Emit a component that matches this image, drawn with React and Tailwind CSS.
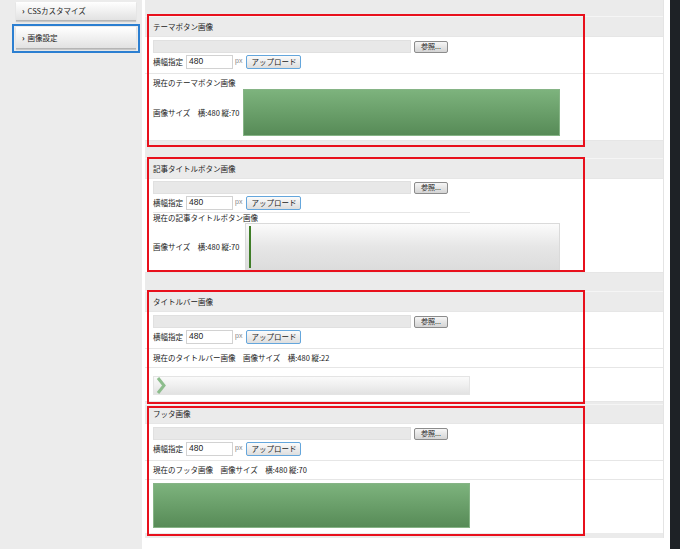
import React from 'react';

// 画像設定ページ（管理画面のスクリーンショット再現）

function FileRow({ tight = false }) {
  return (
    <div className={`px-[8px] ${tight ? 'pt-[2px] pb-[2px]' : 'pt-[3px] pb-[4px]'}`}>
      <div className="flex h-[13px] items-center">
        <div className="h-[13px] w-[258px] border border-[#e0e0e0] bg-[#e8e8e8]" />
        <button className="ml-[3px] flex h-[12px] w-[34px] items-center justify-center rounded-[2px] border border-[#8c8c8c] bg-gradient-to-b from-[#f6f6f6] to-[#d4d4d4] text-[7px] leading-none text-[#222]">
          参照...
        </button>
      </div>
      <div className="mt-[1px] flex h-[15px] items-center">
        <span className="text-[7.5px] leading-none">横幅指定</span>
        <div className="ml-[3px] flex h-[14px] w-[47px] items-center border border-[#d2d2d2] bg-white pl-[2px] font-[family-name:'Liberation_Sans',sans-serif] text-[8.5px] text-[#222]">
          480
        </div>
        <span className="ml-[2px] font-[family-name:'Liberation_Sans',sans-serif] text-[7px] text-[#888]">px</span>
        <button className="ml-[4px] flex h-[14px] w-[55px] items-center justify-center rounded-[2px] border border-[#64a6dc] bg-gradient-to-b from-[#fbfbfb] to-[#dedede] text-[7.5px] leading-none text-[#222]">
          アップロード
        </button>
      </div>
    </div>
  );
}

function GreenImage({ h = 'h-[47px]' }) {
  return <div className={`w-[317px] ${h} border border-[#86b486] bg-gradient-to-b from-[#7db37d] to-[#578b57]`} />;
}

function Header({ children, h = 'h-[20px]' }) {
  return (
    <div className={`flex ${h} items-center border-t border-[#f5f5f5] bg-[#ebebeb] px-[8px] text-[7.5px] text-[#222]`}>
      {children}
    </div>
  );
}

function SideButton({ children, h = 'h-[19px]' }) {
  return (
    <div className={`flex ${h} w-[120px] items-center border-b border-[#b5b5b5] bg-gradient-to-b from-white to-[#e2e2e2] pl-[6px] text-[7.5px] text-[#222] shadow-[0_1px_1px_rgba(0,0,0,0.15)]`}>
      <span className="mr-[3px] text-[8px] font-bold leading-none">›</span>
      {children}
    </div>
  );
}

export default function App() {
  return (
    <div className="flex h-[549px] w-[680px] overflow-hidden bg-[#1e2226] font-[family-name:'Noto_Sans_CJK_JP',sans-serif] text-[#222]">
      {/* サイドメニュー */}
      <aside className="w-[142px] shrink-0 bg-[#ececec] pt-[2px]">
        <div className="ml-[16px]">
          <SideButton>CSSカスタマイズ</SideButton>
        </div>
        <div className="ml-[12px] mt-[3px] h-[29px] w-[128px] border-2 border-[#2c7fd1] px-[2px] pt-[1px]">
          <SideButton h="h-[22px]">画像設定</SideButton>
        </div>
      </aside>

      {/* メイン */}
      <main className="w-[528px] shrink-0 bg-white pl-[3px] pr-[6px]">
        <div className="relative w-[519px] border-r border-[#e4e4e4] text-[7.5px]">
          {/* テーマボタン画像 */}
          <div className="h-[16px] bg-[#ebebeb]" />
          <Header>テーマボタン画像</Header>
          <div className="border-t border-[#e6e6e6]">
            <FileRow />
          </div>
          <div className="border-t border-[#e6e6e6] px-[8px] pt-[3px] pb-[4px]">
            <div className="h-[12px] leading-[12px]">現在のテーマボタン画像</div>
            <div className="flex h-[47px] items-center">
              <span className="w-[90px] shrink-0">画像サイズ　横:480 縦:70</span>
              <GreenImage />
            </div>
          </div>

          {/* 記事タイトルボタン画像 */}
          <div className="h-[18px] border-t border-[#e6e6e6] bg-[#ebebeb]" />
          <Header h="h-[20px]">記事タイトルボタン画像</Header>
          <div className="border-t border-[#e6e6e6] pb-[1px]">
            <FileRow tight />
            <div className="mx-[8px] w-[317px] border-b border-[#e6e6e6]" />
            <div className="h-[10px] px-[8px] leading-[10px]">現在の記事タイトルボタン画像</div>
            <div className="flex h-[48px] items-center px-[8px]">
              <span className="w-[92px] shrink-0">画像サイズ　横:480 縦:70</span>
              <div className="flex h-[48px] w-[315px] items-stretch border border-[#dadada] bg-gradient-to-b from-[#fbfbfb] via-[#e6e6e6] to-[#dcdcdc] py-[2px] pl-[3px]">
                <div className="w-[2px] bg-[#3f7d28]" />
              </div>
            </div>
          </div>

          {/* タイトルバー画像 */}
          <div className="h-[19px] border-t border-[#e6e6e6] bg-[#ebebeb]" />
          <Header>タイトルバー画像</Header>
          <div className="border-t border-[#e6e6e6]">
            <FileRow />
          </div>
          <div className="flex h-[19px] items-center border-t border-[#e6e6e6] px-[8px]">
            現在のタイトルバー画像　画像サイズ　横:480 縦:22
          </div>
          <div className="border-t border-[#e6e6e6] px-[8px] pt-[8px] pb-[6px]">
            <div className="flex h-[19px] w-[317px] items-center border border-[#e4e4e4] bg-gradient-to-b from-[#fafafa] via-[#efefef] to-[#e2e2e2] pl-[2px]">
              <svg width="10" height="17" viewBox="0 0 10 17">
                <polyline points="2,1 8,8.5 2,16" fill="none" stroke="#8dbd8d" strokeWidth="3" />
              </svg>
            </div>
          </div>

          {/* フッタ画像 */}
          <div className="h-[3px] border-t border-[#e6e6e6] bg-[#ebebeb]" />
          <Header h="h-[19px]">フッタ画像</Header>
          <div className="border-t border-[#e6e6e6]">
            <FileRow />
          </div>
          <div className="flex h-[19px] items-center border-t border-[#e6e6e6] px-[8px]">
            現在のフッタ画像　画像サイズ　横:480 縦:70
          </div>
          <div className="border-t border-[#e6e6e6] px-[8px] pt-[3px] pb-[5px]">
            <GreenImage h="h-[45px]" />
          </div>
          <div className="h-[5px] bg-[#ebebeb]" />

          {/* 赤枠（注釈） */}
          <div className="pointer-events-none absolute left-[2px] top-[14px] h-[133px] w-[438px] border-2 border-[#e8101c]" />
          <div className="pointer-events-none absolute left-[2px] top-[157px] h-[115px] w-[438px] border-2 border-[#e8101c]" />
          <div className="pointer-events-none absolute left-[2px] top-[290px] h-[114px] w-[438px] border-2 border-[#e8101c]" />
          <div className="pointer-events-none absolute left-[2px] top-[406px] h-[130px] w-[438px] border-2 border-[#e8101c]" />
        </div>
      </main>
    </div>
  );
}
